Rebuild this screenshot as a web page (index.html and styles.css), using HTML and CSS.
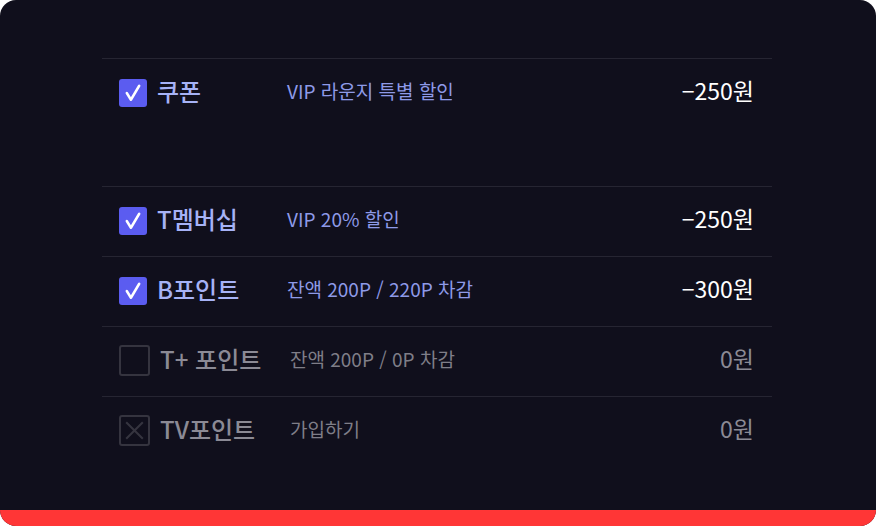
FILE: index.html
```html
<!DOCTYPE html>
<html lang="ko">
<head>
<meta charset="utf-8">
<link rel="stylesheet" href="styles.css">
</head>
<body>
<div class="card">
  <div class="content">
    <div class="group">
      <div class="row">
        <span class="cb checked"><svg viewBox="0 0 27 27"><path d="M7.5 13.5 L11.5 20 L19.5 6.5" /></svg></span>
        <span class="label">쿠폰</span>
        <span class="desc">VIP 라운지 특별 할인</span>
        <span class="amount">−250원</span>
      </div>
    </div>
    <div class="group second">
      <div class="row">
        <span class="cb checked"><svg viewBox="0 0 27 27"><path d="M7.5 13.5 L11.5 20 L19.5 6.5" /></svg></span>
        <span class="label">T멤버십</span>
        <span class="desc">VIP 20% 할인</span>
        <span class="amount">−250원</span>
      </div>
      <div class="row">
        <span class="cb checked"><svg viewBox="0 0 27 27"><path d="M7.5 13.5 L11.5 20 L19.5 6.5" /></svg></span>
        <span class="label">B포인트</span>
        <span class="desc">잔액 200P / 220P 차감</span>
        <span class="amount">−300원</span>
      </div>
      <div class="row off">
        <span class="cb empty"></span>
        <span class="label">T+ 포인트</span>
        <span class="desc">잔액 200P / 0P 차감</span>
        <span class="amount">0원</span>
      </div>
      <div class="row off">
        <span class="cb empty"><svg viewBox="0 0 26 26"><path d="M5 5 L21 21 M21 5 L5 21" /></svg></span>
        <span class="label">TV포인트</span>
        <span class="desc">가입하기</span>
        <span class="amount">0원</span>
      </div>
    </div>
  </div>
  <div class="bar"></div>
</div>
</body>
</html>
```

FILE: styles.css
```css
* { box-sizing: border-box; }
html, body {
  margin: 0;
  padding: 0;
  background: #ffffff;
}
body {
  font-family: "Noto Sans CJK KR", "Noto Sans", sans-serif;
}
.card {
  width: 876px;
  height: 526px;
  background: #100f1c;
  border-radius: 16px;
  overflow: hidden;
  display: flex;
  flex-direction: column;
}
.content {
  flex: 1;
  padding: 58px 104px 0 102px;
}
.group.second {
  margin-top: 58px;
}
.row {
  height: 70px;
  border-top: 1px solid #262532;
  display: flex;
  align-items: center;
  padding: 0 18px 2px 17px;
}
.cb {
  width: 28px;
  height: 28px;
  border-radius: 3px;
  flex: none;
  display: flex;
  align-items: center;
  justify-content: center;
  margin-right: 10px;
}
.cb.checked {
  background: #5b5cf0;
}
.cb.checked svg {
  width: 28px;
  height: 28px;
  fill: none;
  stroke: #ffffff;
  stroke-width: 2.4;
  stroke-linecap: round;
  stroke-linejoin: round;
}
.cb.empty {
  width: 31px;
  height: 31px;
  border: 2px solid #35343f;
  border-radius: 3px;
  margin-right: 10px;
}
.cb.empty svg {
  width: 27px;
  height: 27px;
  fill: none;
  stroke: #35343f;
  stroke-width: 2;
}
.label, .desc, .amount {
  line-height: 1;
  margin-bottom: 4px;
}
.label {
  width: 130px;
  flex: none;
  font-size: 24px;
  font-weight: 500;
  color: #a6b2f6;
}
.desc {
  flex: 1;
  font-size: 19px;
  font-weight: 400;
  color: #8e9ae8;
}
.amount {
  font-size: 23px;
  color: #ffffff;
  font-weight: 400;
}
.row.off .label {
  color: #8b8a95;
}
.row.off .desc {
  color: #7f7e88;
}
.row.off .amount {
  color: #8b8a95;
}
.bar {
  height: 16px;
  background: #ff3636;
  flex: none;
}
```
